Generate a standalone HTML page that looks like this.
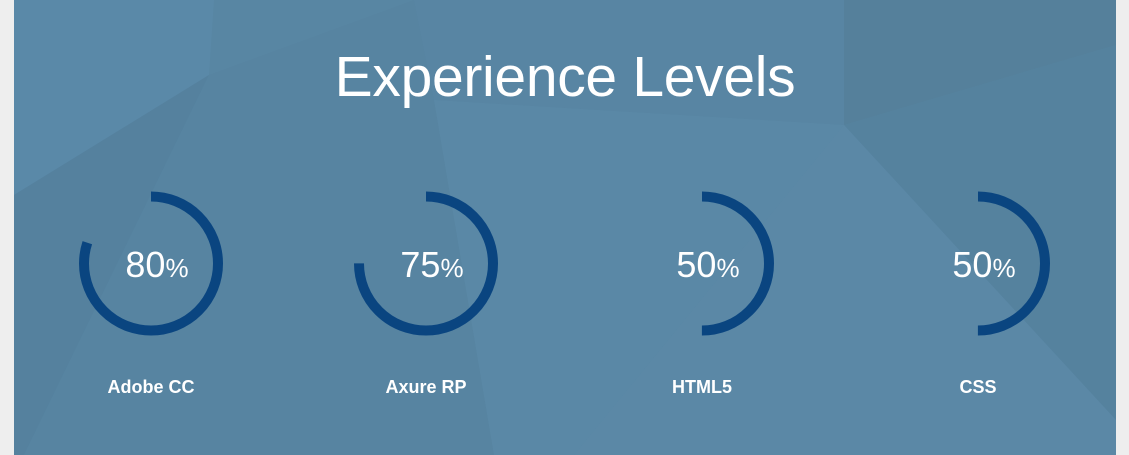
<!DOCTYPE html>
<html><head><style>
html,body{margin:0;padding:0;width:1129px;height:455px;overflow:hidden;background:#eeeeee;font-family:"Liberation Sans",sans-serif}
.wrap{position:absolute;left:14px;top:0;width:1102px;height:455px;overflow:hidden;background:#5886a3}
svg{position:absolute;left:0;top:0}
h1{position:absolute;left:0;width:1102px;top:44px;margin:0;text-align:center;color:#fff;font-weight:normal;font-size:57px;letter-spacing:-0.3px}
.pct{position:absolute;width:140px;text-align:center;color:#fff;font-size:36px;top:244px}
.pct small{font-size:26px}
.lbl{position:absolute;width:160px;text-align:center;color:#fff;font-size:18px;font-weight:bold;top:377px}
</style></head><body>
<div class="wrap">
<svg width="1102" height="455">
<polygon points="0,0 200,0 195,75 0,195" fill="#5a89a8"/>
<polygon points="0,195 195,75 10,455 0,455" fill="#55819e"/>
<polygon points="195,75 400,0 420,100 480,455 10,455" fill="#5784a1"/>
<polygon points="400,0 830,0 830,125 420,100" fill="#5885a3"/>
<polygon points="830,0 1102,0 1102,45 830,125" fill="#55809b"/>
<polygon points="830,125 1102,45 1102,420" fill="#55829e"/>
<polygon points="420,100 830,125 560,455 480,455" fill="#5a88a6"/>
<polygon points="830,125 1102,420 1102,455 560,455" fill="#5b88a6"/>
<g fill="none" stroke="#0a4580" stroke-width="10">
<circle cx="137" cy="263.5" r="67" stroke-dasharray="336.8 500" transform="rotate(-90 137 263.5)"/>
<circle cx="412" cy="263.5" r="67" stroke-dasharray="315.7 500" transform="rotate(-90 412 263.5)"/>
<circle cx="688" cy="263.5" r="67" stroke-dasharray="210.5 500" transform="rotate(-90 688 263.5)"/>
<circle cx="964" cy="263.5" r="67" stroke-dasharray="210.5 500" transform="rotate(-90 964 263.5)"/>
</g>
</svg>
<h1>Experience Levels</h1>
<div class="pct" style="left:73px">80<small>%</small></div>
<div class="pct" style="left:348px">75<small>%</small></div>
<div class="pct" style="left:624px">50<small>%</small></div>
<div class="pct" style="left:900px">50<small>%</small></div>
<div class="lbl" style="left:57px">Adobe CC</div>
<div class="lbl" style="left:332px">Axure RP</div>
<div class="lbl" style="left:608px">HTML5</div>
<div class="lbl" style="left:884px">CSS</div>
</div>
</body></html>
